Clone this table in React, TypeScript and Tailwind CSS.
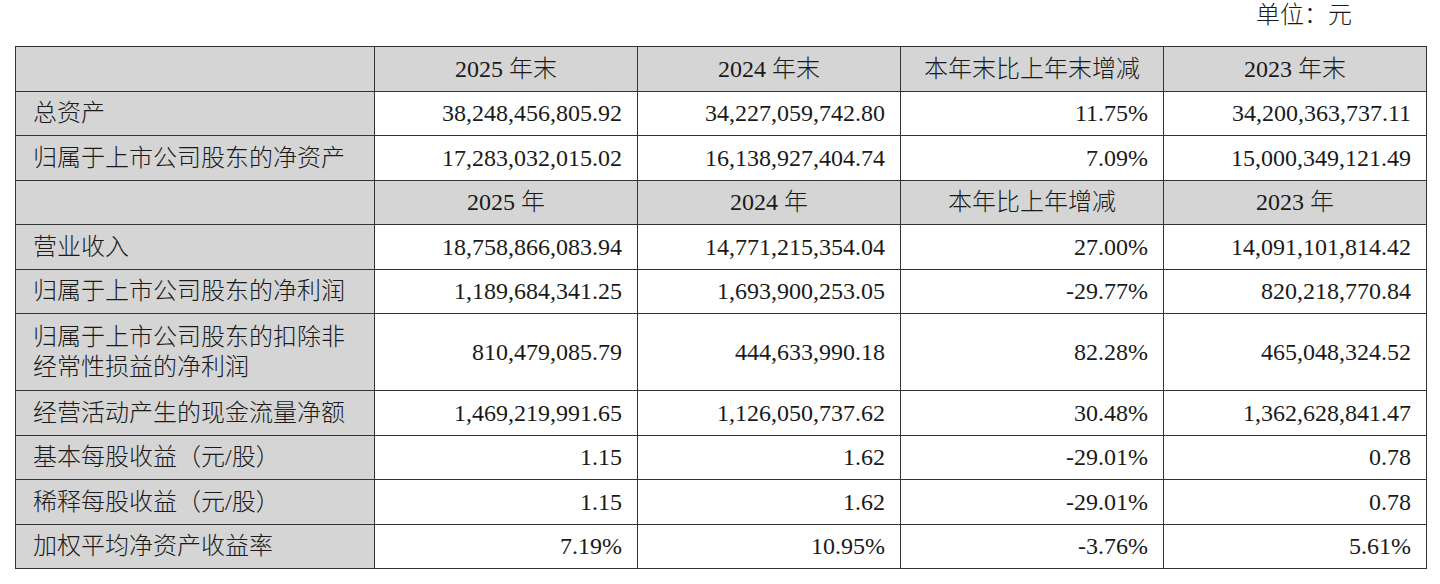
type Row = {
  label: string[]
  values: string[]
  header?: boolean
  tall?: boolean
}

const rows: Row[] = [
  { label: [''], values: ['2025 年末', '2024 年末', '本年末比上年末增减', '2023 年末'], header: true },
  { label: ['总资产'], values: ['38,248,456,805.92', '34,227,059,742.80', '11.75%', '34,200,363,737.11'] },
  { label: ['归属于上市公司股东的净资产'], values: ['17,283,032,015.02', '16,138,927,404.74', '7.09%', '15,000,349,121.49'] },
  { label: [''], values: ['2025 年', '2024 年', '本年比上年增减', '2023 年'], header: true },
  { label: ['营业收入'], values: ['18,758,866,083.94', '14,771,215,354.04', '27.00%', '14,091,101,814.42'] },
  { label: ['归属于上市公司股东的净利润'], values: ['1,189,684,341.25', '1,693,900,253.05', '-29.77%', '820,218,770.84'] },
  {
    label: ['归属于上市公司股东的扣除非', '经常性损益的净利润'],
    values: ['810,479,085.79', '444,633,990.18', '82.28%', '465,048,324.52'],
    tall: true,
  },
  { label: ['经营活动产生的现金流量净额'], values: ['1,469,219,991.65', '1,126,050,737.62', '30.48%', '1,362,628,841.47'] },
  { label: ['基本每股收益（元/股）'], values: ['1.15', '1.62', '-29.01%', '0.78'] },
  { label: ['稀释每股收益（元/股）'], values: ['1.15', '1.62', '-29.01%', '0.78'] },
  { label: ['加权平均净资产收益率'], values: ['7.19%', '10.95%', '-3.76%', '5.61%'] },
]

const font = { fontFamily: '"Liberation Serif", "Noto Sans CJK SC", serif' }

export default function App() {
  return (
    <div className="w-[1440px] h-[584px] bg-white text-[#1a1a1a]" style={font}>
      <div className="h-[46px] flex justify-end pr-[88px]">
        <span className="text-[24px] leading-[30px] font-light">单位：元</span>
      </div>
      <table className="ml-[15px] w-[1411px] table-fixed border-collapse text-[24px] leading-[30px]">
        <colgroup>
          <col className="w-[359px]" />
          <col className="w-[263px]" />
          <col className="w-[263px]" />
          <col className="w-[263px]" />
          <col className="w-[263px]" />
        </colgroup>
        <tbody>
          {rows.map((row, i) => (
            <tr key={i} className={row.tall ? 'h-[77px]' : 'h-[44.5px]'}>
              <td className="border border-[#333333] bg-[#d5d5d5] pl-[17px] pr-2 py-0 font-light">
                {row.label.map((l, j) => (
                  <div key={j}>{l}</div>
                ))}
              </td>
              {row.values.map((v, j) => (
                <td
                  key={j}
                  className={
                    row.header
                      ? 'border border-[#333333] bg-[#d5d5d5] px-2 py-0 text-center font-light'
                      : 'border border-[#333333] bg-white pr-[15px] pl-2 py-0 text-right'
                  }
                >
                  {v}
                </td>
              ))}
            </tr>
          ))}
        </tbody>
      </table>
    </div>
  )
}
